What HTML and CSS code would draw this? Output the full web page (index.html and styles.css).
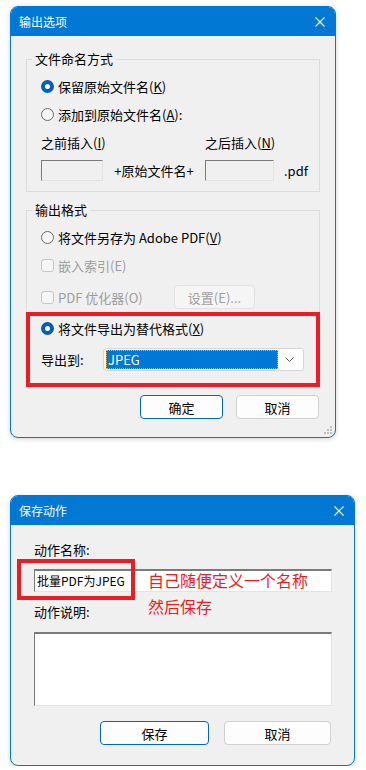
FILE: index.html
```html
<!DOCTYPE html>
<html lang="zh-CN">
<head>
  <meta charset="UTF-8">
  <meta name="viewport" content="width=device-width, initial-scale=1.0">
  <title>输出选项 / 保存动作</title>
  <link rel="stylesheet" href="styles.css">
</head>
<body>
  <!-- 输出选项 dialog -->
  <div class="dialog export-dialog">
    <div class="titlebar">
      <span class="title">输出选项</span>
      <svg class="close" width="10" height="10" viewBox="0 0 10 10"><path d="M0.5 0.5L9.5 9.5M9.5 0.5L0.5 9.5" stroke="#fff" stroke-width="1.1"/></svg>
    </div>
    <div class="dialog-body">
      <fieldset class="group">
        <legend>文件命名方式</legend>
        <div class="option"><span class="radio checked"></span>保留原始文件名(<u>K</u>)</div>
        <div class="option"><span class="radio"></span>添加到原始文件名(<u>A</u>):</div>
        <div class="affix-grid">
          <span>之前插入(<u>I</u>)</span>
          <span></span>
          <span>之后插入(<u>N</u>)</span>
          <span></span>
          <span class="field disabled"></span>
          <span class="mid">+原始文件名+</span>
          <span class="field disabled"></span>
          <span class="ext">.pdf</span>
        </div>
      </fieldset>

      <fieldset class="group format-group">
        <legend>输出格式</legend>
        <div class="option"><span class="radio"></span>将文件另存为 Adobe PDF(<u>V</u>)</div>
        <div class="option muted"><span class="check"></span>嵌入索引(E)</div>
        <div class="option option-btn muted">
          <span class="check"></span>PDF 优化器(O)
          <span class="btn btn-disabled settings-btn">设置(E)...</span>
        </div>
        <div class="highlight">
          <div class="option"><span class="radio checked"></span>将文件导出为替代格式(<u>X</u>)</div>
          <div class="export-row">
            <span class="export-label">导出到:</span>
            <div class="combo">
              <span class="combo-value">JPEG</span>
              <svg class="chevron" width="9" height="5" viewBox="0 0 9 5"><path d="M0.5 0.5L4.5 4.5L8.5 0.5" fill="none" stroke="#606060" stroke-width="1"/></svg>
            </div>
          </div>
        </div>
      </fieldset>

      <div class="buttons">
        <span class="btn btn-default ok-btn">确定</span>
        <span class="btn ok-btn">取消</span>
      </div>
    </div>
    <svg class="grip" width="8" height="8" viewBox="0 0 8 8">
      <rect x="6" y="0" width="2" height="2" fill="#c0c0c0"/>
      <rect x="3" y="3" width="2" height="2" fill="#c0c0c0"/>
      <rect x="6" y="3" width="2" height="2" fill="#c0c0c0"/>
      <rect x="0" y="6" width="2" height="2" fill="#c0c0c0"/>
      <rect x="3" y="6" width="2" height="2" fill="#c0c0c0"/>
      <rect x="6" y="6" width="2" height="2" fill="#c0c0c0"/>
    </svg>
  </div>

  <!-- 保存动作 dialog -->
  <div class="dialog save-dialog">
    <div class="titlebar">
      <span class="title">保存动作</span>
      <svg class="close" width="10" height="10" viewBox="0 0 10 10"><path d="M0.5 0.5L9.5 9.5M9.5 0.5L0.5 9.5" stroke="#fff" stroke-width="1.1"/></svg>
    </div>
    <div class="dialog-body save-body">
      <div class="save-label">动作名称:</div>
      <div class="name-wrap">
        <div class="field text-field">批量PDF为JPEG</div>
        <div class="mark-box"></div>
        <div class="mark-note">自己随便定义一个名称<br>然后保存</div>
      </div>
      <div class="save-label desc-label">动作说明:</div>
      <div class="field text-area"></div>
      <div class="buttons save-buttons">
        <span class="btn btn-default save-btn">保存</span>
        <span class="btn cancel-btn">取消</span>
      </div>
    </div>
  </div>
</body>
</html>
```

FILE: styles.css
```css
body {
  margin: 0;
  padding: 0;
  background: #fff;
  font-family: "Noto Sans CJK SC", "Noto Sans", sans-serif;
  color: #000;
}
u {
  text-decoration: underline;
  text-underline-offset: 1px;
}
.dialog {
  position: relative;
  margin-left: 10px;
  border: 1px solid #0078d4;
  border-radius: 8px;
  background: #f0f0f0;
  box-shadow: 0 1px 5px rgba(0, 0, 0, 0.18);
  overflow: hidden;
}
.export-dialog {
  margin-top: 6px;
  width: 324px;
  font-size: 13px;
}
.save-dialog {
  margin-top: 57px;
  width: 343px;
  font-size: 13px;
}
.titlebar {
  display: flex;
  align-items: center;
  justify-content: space-between;
  height: 29px;
  margin-top: -1px;
  padding: 1px 10px 0 8px;
  background: #0078d4;
  color: #fff;
  font-size: 12px;
}
.title {
  line-height: 16px;
}
.close {
  display: block;
}
.dialog-body {
  padding: 15px 15px 18px 15px;
}

/* group boxes */
.group {
  margin: 0;
  padding: 1px 14px 10px 14px;
  border: 1px solid #dcdcdc;
  min-inline-size: 0;
}
.group legend {
  margin-left: -9px;
  padding: 0 3px;
  line-height: 16px;
}
.format-group {
  margin-top: 10px;
  padding-bottom: 4px;
}
.option {
  display: flex;
  align-items: center;
  height: 20px;
  margin-top: 8px;
  white-space: nowrap;
}
.option.muted {
  color: #9d9d9d;
}
.option-btn {
  height: 24px;
  margin-top: 10px;
}
.radio {
  box-sizing: border-box;
  width: 13px;
  height: 13px;
  margin-right: 4px;
  border: 1px solid #686868;
  border-radius: 50%;
  background: #f7f7f7;
  flex: none;
}
.radio.checked {
  border: 4px solid #005fb8;
  background: #fff;
}
.check {
  box-sizing: border-box;
  width: 13px;
  height: 13px;
  margin-right: 4px;
  border: 1px solid #c6c6c6;
  border-radius: 3px;
  background: #f6f6f6;
  flex: none;
}

/* file name affixes */
.affix-grid {
  display: grid;
  grid-template-columns: 62px 102px 69px auto;
  grid-template-rows: 20px 21px;
  row-gap: 8px;
  margin-top: 8px;
  align-items: center;
  white-space: nowrap;
}
.mid {
  text-align: center;
}
.ext {
  padding-left: 10px;
}
.field {
  box-sizing: border-box;
  display: block;
  border-style: solid;
  border-width: 1px;
  border-color: #7a7a7a #e3e3e3 #e3e3e3 #7a7a7a;
  background: #fff;
}
.field.disabled {
  height: 21px;
  background: #f0f0f0;
}

/* buttons */
.btn {
  box-sizing: border-box;
  display: inline-flex;
  align-items: center;
  justify-content: center;
  height: 24px;
  border: 1px solid #d0d0d0;
  border-radius: 4px;
  background: #fdfdfd;
  white-space: nowrap;
}
.btn-default {
  border-color: #0067c0;
}
.btn-disabled {
  color: #a0a0a0;
  border-color: #e2e2e2;
  background: #f5f5f5;
}
.settings-btn {
  width: 81px;
  margin-left: auto;
  margin-right: 50px;
}
.buttons {
  display: flex;
  justify-content: flex-end;
  gap: 13px;
  margin-top: 8px;
  padding-right: 1px;
}
.ok-btn {
  width: 83px;
}

/* annotation box around the export option */
.highlight {
  margin: 3px -15px -5px -15px;
  padding: 2px 12px 12px 11px;
  border: 4px solid #ec1c24;
}
.highlight .option {
  margin-top: 0;
}
.export-row {
  display: flex;
  align-items: center;
  height: 23px;
  margin-top: 10px;
}
.export-label {
  width: 62px;
  flex: none;
}
.combo {
  box-sizing: border-box;
  display: flex;
  align-items: center;
  flex: 1;
  height: 23px;
  padding: 1px 9px 1px 2px;
  border: 1px solid #d6d6d6;
  border-radius: 3px;
  background: #fdfdfd;
}
.combo-value {
  box-sizing: border-box;
  flex: 1;
  height: 19px;
  line-height: 17px;
  padding-left: 1px;
  border: 1px dotted #f5a340;
  background: #0078d7;
  color: #fff;
  font-size: 13px;
}
.chevron {
  margin-left: 7px;
}
.grip {
  position: absolute;
  right: 3px;
  bottom: 3px;
}

/* save action dialog */
.save-body {
  padding: 15px 22px 20px 23px;
}
.save-label {
  height: 20px;
  line-height: 20px;
}
.desc-label {
  margin-top: 10px;
}
.name-wrap {
  position: relative;
  margin-top: 9px;
}
.text-field {
  height: 23px;
  padding-left: 2px;
  border-top-width: 2px;
  font-size: 12px;
  line-height: 20px;
}
.mark-box {
  position: absolute;
  left: -17px;
  top: -10px;
  width: 118px;
  height: 41px;
  box-sizing: border-box;
  border: 4px solid #ec1c24;
}
.mark-note {
  position: absolute;
  left: 114px;
  top: -2px;
  color: #ec1c24;
  font-size: 16px;
  line-height: 26px;
  white-space: nowrap;
}
.text-area {
  height: 74px;
  margin-top: 10px;
  border-top-width: 2px;
}
.save-buttons {
  gap: 15px;
  margin-top: 15px;
}
.save-btn {
  width: 109px;
}
.cancel-btn {
  width: 107px;
}
```
